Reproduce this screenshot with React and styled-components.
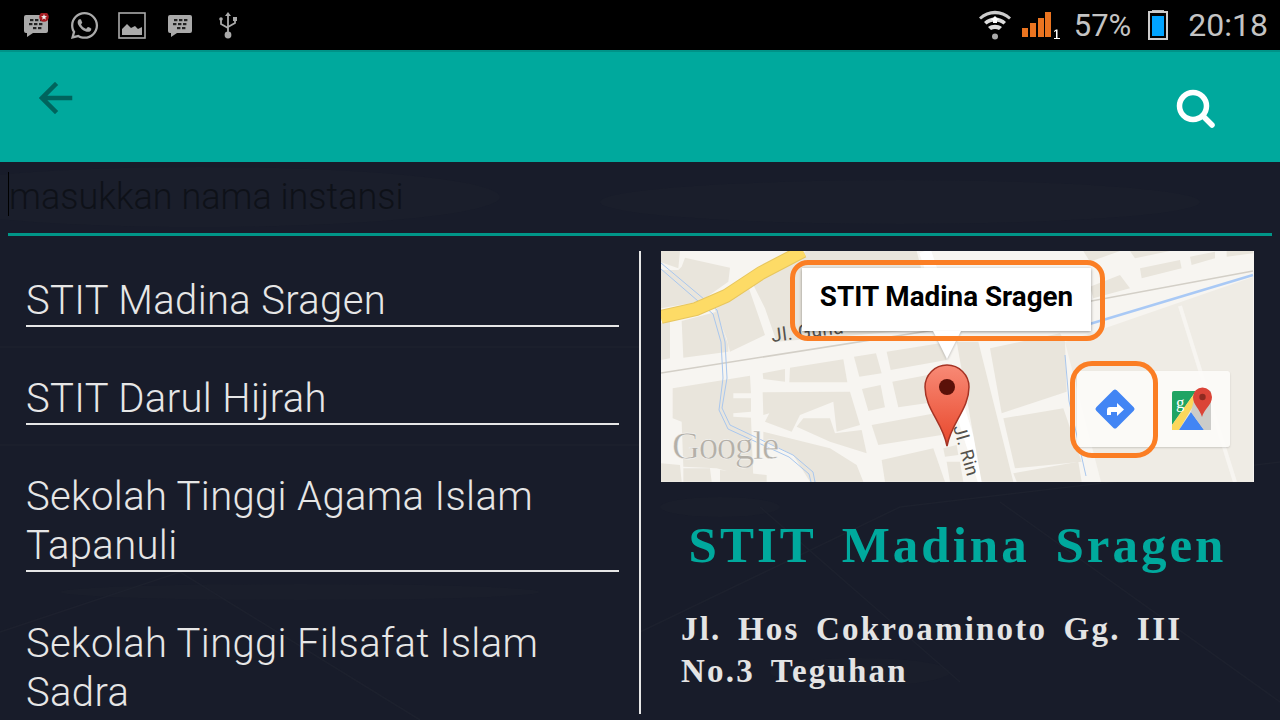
import React from 'react';
import styled, { createGlobalStyle } from 'styled-components';
import { FaWhatsapp } from 'react-icons/fa';

const GlobalStyle = createGlobalStyle`
	html, body {
		margin: 0;
		padding: 0;
		background: #181c2a;
	}
`

const places = [
	'STIT Madina Sragen',
	'STIT Darul Hijrah',
	'Sekolah Tinggi Agama Islam Tapanuli',
	'Sekolah Tinggi Filsafat Islam Sadra'
];

// map blocks, traced at 3x
const leftBlocks = [
	'33,18 90,18 85,70 33,52',
	'105,38 240,68 235,110 150,170 90,180 33,190 33,75 85,75 95,65',
	'300,100 470,18 800,18 860,250 380,290 345,190',
	'95,228 200,200 235,300 235,320 100,338',
	'33,235 60,225 60,340 33,345',
	'250,135 290,110 345,270 240,320 230,280 195,195',
	'68,430 300,392 303,445 250,445 250,460 303,460 303,500 250,505 250,515 303,518 310,700 200,670 100,665 95,530 68,520',
	'338,385 405,372 405,410 340,402',
	'420,368 580,343 592,412 418,412',
	'612,335 678,325 695,385 628,395',
	'710,320 870,295 890,345 722,375',
	'636,432 692,420 705,487 655,498',
	'727,410 845,388 850,440 860,470 745,487',
	'338,442 600,440 630,540 560,560 550,470 450,510 425,560 345,530 358,505 340,510',
	'440,545 460,520 540,520 555,565 635,555 650,625 540,590',
	'665,540 855,505 875,570 685,600',
	'340,560 540,610 620,660 640,710 480,710 430,630 340,585',
	'695,645 850,610 885,710 705,710',
	'880,610 920,600 925,630 885,635',
	'890,650 930,650 940,710 900,710',
	'33,655 90,660 95,710 33,710',
	'100,670 180,670 185,710 100,710',
	'210,675 350,690 350,710 210,710'
];
const rightBlocks = [
	'20,290 85,290 190,710 95,710',
	'120,310 330,265 345,290 350,440 155,505',
	'160,520 340,490 395,650 195,670',
	'190,685 385,650 395,710 200,710',
	'420,125 510,90 540,130 430,160',
	'570,70 690,45 695,70 575,100',
	'720,35 795,20 795,40 725,60',
	'830,18 910,18 910,25 830,35',
	'540,18 660,18 555,40',
	'400,18 510,18 420,50'
];

const BbmIcon = ({ badge }) => (
	<svg width="26" height="25" viewBox="0 0 26 25">
		<path d="M3 2h20a2 2 0 0 1 2 2v14a2 2 0 0 1-2 2H10l-6 4v-4H3a2 2 0 0 1-2-2V4a2 2 0 0 1 2-2z" fill="#aaa" />
		<g fill="#222">
			<rect x="7" y="6" width="3.4" height="2.2" />
			<rect x="12" y="6" width="3.4" height="2.2" />
			<rect x="17" y="6" width="3.4" height="2.2" />
			<rect x="6" y="10" width="3.4" height="2.2" />
			<rect x="11" y="10" width="3.4" height="2.2" />
			<rect x="16" y="10" width="3.4" height="2.2" />
			<rect x="10" y="14" width="3.4" height="2.2" />
			<rect x="15" y="14" width="3.4" height="2.2" />
		</g>
		{badge && <circle cx="21" cy="4" r="4.8" fill="#a51c22" />}
		{badge && <path d="M21 1l.8 2.1 2.2.1-1.7 1.4.6 2.2-1.9-1.2-1.9 1.2.6-2.2-1.7-1.4 2.2-.1z" fill="#eee" />}
	</svg>
);

const PictureIcon = () => (
	<svg width="28" height="27" viewBox="0 0 28 27">
		<rect x="1" y="1" width="26" height="25" fill="none" stroke="#aaa" strokeWidth="1.6" />
		<path d="M4 23v-6l5-5 4 4 4-2 3 3 4-2v8z" fill="#aaa" />
	</svg>
);

const UsbIcon = () => (
	<svg width="18" height="27" viewBox="0 0 18 27" fill="none" stroke="#aaa" strokeWidth="1.8">
		<path d="M9 3v20M2 8v4l7 4M16 8v3l-7 4" />
		<path d="M9 0l3 4H6z" fill="#aaa" stroke="none" />
		<circle cx="2" cy="7" r="1.8" fill="#aaa" stroke="none" />
		<rect x="14" y="5" width="4" height="4" fill="#aaa" stroke="none" />
		<circle cx="9" cy="23" r="3.4" fill="#aaa" stroke="none" />
	</svg>
);

const WifiIcon = () => (
	<svg width="32" height="30" viewBox="0 0 32 30">
		<path d="M0 7.500C9-1.500 23-1.500 32 7.500l-2 2C22 2.500 10 2.500 2 9.500z" fill="#ccc" />
		<path d="M5 12c6-6 16-6 22 0l-2.500 2.500c-5-4-12-4-17 0z" fill="#ddd" />
		<path d="M16 6l4 4h-2v3h-4v-3h-2z" fill="#fff" />
		<path d="M9 17c4-3 10-3 14 0l-3 3c-2.500-1.500-5.500-1.500-8 0z" fill="#ddd" />
		<circle cx="16" cy="26.500" r="3" fill="#aaa" />
	</svg>
);

const SignalIcon = () => (
	<svg width="38" height="27" viewBox="0 0 38 27">
		<g fill="#ea7420">
			<rect x="0" y="16" width="6" height="9" />
			<rect x="8" y="11" width="6" height="14" />
			<rect x="16" y="6" width="6" height="19" />
			<rect x="23" y="0" width="6" height="25" />
		</g>
		<path d="M32 19l2-1.500h1.500V26H38v1h-6v-1h2v-7l-2 1z" fill="#fff" />
	</svg>
);

const BatteryIcon = () => (
	<svg width="20" height="30" viewBox="0 0 20 30">
		<rect x="4" y="0" width="12" height="3" fill="#bbb" />
		<rect x="1" y="2" width="18" height="27" fill="#000" stroke="#ccc" strokeWidth="2" />
		<rect x="4" y="6" width="12" height="20" fill="#00a3ff" />
	</svg>
);

const MapArt = () => (
	<svg width="593" height="231" viewBox="0 0 593 231">
		<defs>
			<linearGradient id="pinFill" x1="0" y1="0" x2="0" y2="1">
				<stop offset="0" stopColor="#f88a76" />
				<stop offset="1" stopColor="#e8472b" />
			</linearGradient>
		</defs>
		<rect width="593" height="231" fill="#f7f5f1" />
		<g fill="#e9e5dc" transform="translate(-11 -6) scale(0.3333)">
			{leftBlocks.map((points) => <polygon key={points} points={points} />)}
		</g>
		<path d="M264 0L276 36" fill="none" stroke="#fff" strokeWidth="12" />
		<path d="M290 130L322 231" fill="none" stroke="#fff" strokeWidth="10" />
		<path d="M404 91L592 26V231H440z" fill="#efece5" />
		<g fill="#e9e5dc" transform="translate(289 -6) scale(0.3333)">
			{rightBlocks.map((points) => <polygon key={points} points={points} />)}
		</g>
		<path d="M519 55L574 231" fill="none" stroke="#f7f5f1" strokeWidth="4" />
		<path d="M0 122L280 78L592 20" fill="none" stroke="#d3cfc7" strokeWidth="1.500" />
		<g fill="none" stroke="#a9c7ee" strokeWidth="1">
			<path d="M0 12L56 59L64 91L66 127L61 157L69 174L132 204L152 221L154 231" />
			<path d="M0 18L52 63L60 91L62 127L58 159L67 178L128 206L148 223L150 231" />
			<path d="M404 104L408 150L425 225" />
		</g>
		<path d="M412 78L592 24" fill="none" stroke="#a9c9f5" strokeWidth="2.500" />
		<path d="M0 66L35 58L65 45L100 22L142 0" fill="none" stroke="#e7c65f" strokeWidth="14" />
		<path d="M0 66L35 58L65 45L100 22L142 0" fill="none" stroke="#fddb66" strokeWidth="12" />
		<MapLabel x="111" y="91" fontSize="19" transform="rotate(-7 111 91)">Jl. Guna</MapLabel>
		<MapLabel x="292" y="176" fontSize="18" transform="rotate(74 292 176)">Jl. Rin</MapLabel>
		<GoogleWord x="11" y="208">Google</GoogleWord>
		<path d="M286 195C282 172 264 158 264 136a22 22 0 0 1 44 0C308 158 290 172 286 195z" fill="url(#pinFill)" stroke="#a53324" strokeWidth="1.500" />
		<circle cx="286" cy="136" r="8" fill="#5b1109" />
	</svg>
);

const DirectionsIcon = () => (
	<svg width="42" height="42" viewBox="0 0 42 42">
		<rect x="6.500" y="6.500" width="29" height="29" rx="2.500" fill="#4285f4" transform="rotate(45 21 21)" />
		<path d="M13 27v-5a3 3 0 0 1 3-3h7v-4l7 6.500-7 6.500v-4h-6v3z" fill="#fff" />
	</svg>
);

const MapsIcon = () => (
	<svg width="42" height="44" viewBox="0 0 42 44">
		<rect x="1" y="4" width="39" height="39" rx="2" fill="#e8e6e2" />
		<path d="M1 6a2 2 0 0 1 2-2h22L1 38z" fill="#1fa463" />
		<path d="M1 43V38L25 4h6L8 43z" fill="#fbd75b" />
		<path d="M8 43L20 25L33 43z" fill="#4285f4" />
		<path d="M25 4h15v39h-7L20 25z" fill="#c9c9c6" opacity="0.9" />
		<MapsG x="5" y="21">g</MapsG>
		<path d="M31 30C29 22 22 18 22 10a9.500 9.500 0 0 1 19 0C41 18 33 22 31 30z" fill="#db4437" />
		<circle cx="31.500" cy="10" r="3.200" fill="#8e2a20" />
	</svg>
);

const Backdrop = () => (
	<svg width="1280" height="558" viewBox="0 0 1280 558">
		<g fill="#1a1e2b">
			<ellipse cx="860" cy="510" rx="90" ry="14" />
			<ellipse cx="720" cy="345" rx="60" ry="10" />
			<ellipse cx="300" cy="430" rx="240" ry="8" />
			<ellipse cx="200" cy="35" rx="300" ry="30" />
			<ellipse cx="900" cy="40" rx="300" ry="22" />
		</g>
		<g fill="none" stroke="#1d212e" strokeWidth="1.500">
			<path d="M0 185H640M0 283H640" />
			<path d="M0 470L180 410L420 558" />
			<path d="M640 470L900 345L1280 300" />
			<path d="M760 345L960 520" />
			<path d="M1000 340L1280 540" />
		</g>
	</svg>
);

const App = () => {
	return (
		<Screen>
			<GlobalStyle />
			<StatusBar>
				<StatusGroup>
					<StatusSlot><BbmIcon badge /></StatusSlot>
					<StatusSlot><FaWhatsapp size={31} color="#aaa" /></StatusSlot>
					<StatusSlot><PictureIcon /></StatusSlot>
					<StatusSlot><BbmIcon /></StatusSlot>
					<StatusSlot><UsbIcon /></StatusSlot>
				</StatusGroup>
				<StatusRight>
					<WifiSlot><WifiIcon /></WifiSlot>
					<SignalIcon />
					<StatusText>57%</StatusText>
					<BatteryIcon />
					<Clock>20:18</Clock>
				</StatusRight>
			</StatusBar>
			<Toolbar>
				<IconButton>
					<svg width="34" height="32" viewBox="0 0 34 32" fill="none" stroke="#00645d" strokeWidth="4.500" strokeLinecap="square">
						<path d="M31 16H4M16 3L3 16L16 29" />
					</svg>
				</IconButton>
				<SearchButton>
					<svg width="40" height="40" viewBox="0 0 40 40" fill="none" stroke="#fff" strokeWidth="5.500" strokeLinecap="round">
						<circle cx="17" cy="17" r="13.500" />
						<path d="M27 27L36 36" />
					</svg>
				</SearchButton>
			</Toolbar>
			<Body>
				<BackdropLayer><Backdrop /></BackdropLayer>
				<SearchRow>
					<Caret />
					<Placeholder>masukkan nama instansi</Placeholder>
				</SearchRow>
				<Columns>
					<List>
						{places.map((name) => (
							<ListItem key={name}>{name}</ListItem>
						))}
					</List>
					<Divider />
					<Detail>
						<MapBox>
							<MapArt />
							<Callout>STIT Madina Sragen</Callout>
							<Highlight $kind="callout" />
							<MapButtons>
								<MapButton><DirectionsIcon /></MapButton>
								<MapButton><MapsIcon /></MapButton>
							</MapButtons>
							<Highlight $kind="button" />
						</MapBox>
						<Title>STIT Madina Sragen</Title>
						<Address>Jl. Hos Cokroaminoto Gg. III No.3 Teguhan</Address>
					</Detail>
				</Columns>
			</Body>
		</Screen>
	);
}

const Screen = styled.div`
	width: 1280px;
	height: 720px;
	overflow: hidden;
	display: flex;
	flex-direction: column;
	background: #181c2a;
	font-family: Roboto, "Liberation Sans", sans-serif;
`
const StatusBar = styled.div`
	height: 50px;
	flex: none;
	background: #000;
	display: flex;
	align-items: center;
	justify-content: space-between;
	padding: 0 12px;
`
const StatusGroup = styled.div`
	display: flex;
	align-items: center;
`
const StatusSlot = styled.div`
	width: 48px;
	display: flex;
	justify-content: center;
	align-items: center;
`
const WifiSlot = styled.div`
	display: flex;
	margin-right: 11px;
`
const StatusRight = styled.div`
	display: flex;
	align-items: center;
`
const StatusText = styled.span`
	font-size: 31px;
	color: #c4c4c4;
	margin-left: 14px;
	margin-right: 17px;
`
const Clock = styled.span`
	font-size: 32px;
	color: #c4c4c4;
	margin-left: 20px;
`
const Toolbar = styled.div`
	height: 112px;
	flex: none;
	box-sizing: border-box;
	background: #00a99d;
	border-top: 2px solid #009388;
	display: flex;
	justify-content: space-between;
	padding: 0 64px 0 39px;
`
const IconButton = styled.div`
	margin-top: 30px;
`
const SearchButton = styled.div`
	margin-top: 37px;
`
const Body = styled.div`
	position: relative;
	flex: 1;
	min-height: 0;
	display: flex;
	flex-direction: column;
`
const BackdropLayer = styled.div`
	position: absolute;
	left: 0;
	top: 0;
`
const SearchRow = styled.div`
	position: relative;
	height: 71px;
	flex: none;
	margin: 0 8px;
	border-bottom: 3px solid #009688;
	display: flex;
	align-items: flex-start;
`
const Caret = styled.div`
	width: 1px;
	height: 44px;
	margin-top: 10px;
	background: #000;
`
const Placeholder = styled.div`
	font-size: 36px;
	line-height: 70px;
	font-weight: 300;
	color: #0e1118;
`
const Columns = styled.div`
	position: relative;
	flex: 1;
	min-height: 0;
	display: flex;
	align-items: flex-start;
	padding-top: 15px;
`
const List = styled.div`
	width: 593px;
	margin-left: 26px;
	padding-top: 25px;
	flex: none;
`
const ListItem = styled.div`
	font-size: 40px;
	line-height: 49px;
	font-weight: 300;
	color: #e6e6e6;
	letter-spacing: 0.35px;
	margin-bottom: 47px;

	&:not(:last-child) {
		border-bottom: 2px solid #e6e6e6;
	}
`
const Divider = styled.div`
	width: 2px;
	height: 463px;
	flex: none;
	margin: 0 20px;
	background: #e6e6e6;
`
const Detail = styled.div`
	width: 593px;
	flex: none;
`
const MapBox = styled.div`
	position: relative;
	width: 593px;
	height: 231px;
	line-height: 0;
	overflow: hidden;
`
const MapLabel = styled.text`
	font-family: Roboto, sans-serif;
	fill: #55524c;
	letter-spacing: 0.5px;
`
const GoogleWord = styled.text`
	font-family: "Liberation Serif", serif;
	font-size: 39px;
	fill: #b4b0a8;
	stroke: #fff;
	stroke-width: 0.4px;
	letter-spacing: -1.500px;
`
const MapsG = styled.text`
	font-family: "Liberation Serif", serif;
	font-size: 17px;
	fill: #fff;
`
const Callout = styled.div`
	position: absolute;
	left: 141px;
	top: 17px;
	width: 289px;
	height: 63px;
	box-sizing: border-box;
	background: #fff;
	box-shadow: 0 1px 3px rgba(0, 0, 0, 0.4);
	text-align: center;
	font-size: 27.8px;
	line-height: 57px;
	font-weight: 700;
	color: #000;

	&::after {
		content: '';
		position: absolute;
		left: 131px;
		top: 63px;
		border-left: 14px solid transparent;
		border-right: 14px solid transparent;
		border-top: 28px solid #fff;
		filter: drop-shadow(0 1px 1px rgba(0, 0, 0, 0.25));
	}
`
const Highlight = styled.div`
	position: absolute;
	box-sizing: border-box;
	border: 5px solid #fb7e24;
	left: ${(props) => (props.$kind === 'callout' ? '129px' : '409px')};
	top: ${(props) => (props.$kind === 'callout' ? '9px' : '110px')};
	width: ${(props) => (props.$kind === 'callout' ? '315px' : '88px')};
	height: ${(props) => (props.$kind === 'callout' ? '81px' : '97px')};
	border-radius: ${(props) => (props.$kind === 'callout' ? '18px' : '22px')};
`
const MapButtons = styled.div`
	position: absolute;
	left: 416px;
	top: 120px;
	width: 153px;
	height: 76px;
	display: flex;
	background: rgba(252, 251, 249, 0.92);
	border-radius: 3px;
	box-shadow: 0 1px 2px rgba(0, 0, 0, 0.15);
`
const MapButton = styled.div`
	flex: 1;
	display: flex;
	align-items: center;
	justify-content: center;
`
const Title = styled.div`
	margin-top: 30px;
	text-align: center;
	font-family: "Liberation Serif", serif;
	font-size: 51px;
	line-height: 66px;
	font-weight: 700;
	color: #00a99d;
	letter-spacing: 3px;
	word-spacing: 10px;
	white-space: nowrap;
`
const Address = styled.div`
	margin-top: 30px;
	padding: 0 20px;
	font-family: "Liberation Serif", serif;
	font-size: 33px;
	line-height: 42px;
	font-weight: 700;
	color: #e4e4e4;
	letter-spacing: 2.200px;
	word-spacing: 6px;
`

export default App;
